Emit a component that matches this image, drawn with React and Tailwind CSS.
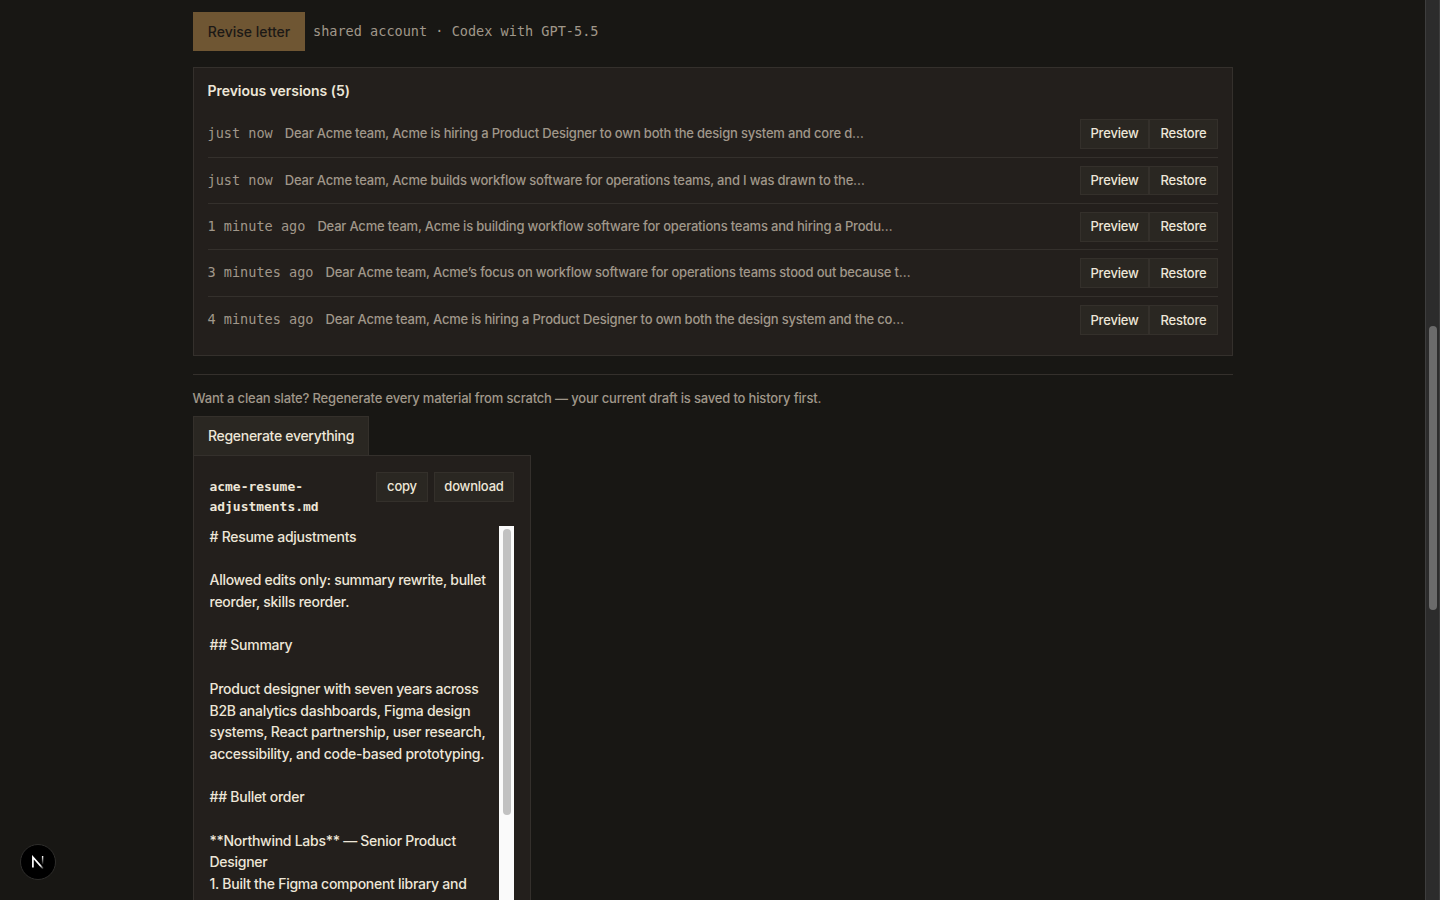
import React from "react";

const versions = [
  {
    when: "just now",
    text: "Dear Acme team, Acme is hiring a Product Designer to own both the design system and core d…",
  },
  {
    when: "just now",
    text: "Dear Acme team, Acme builds workflow software for operations teams, and I was drawn to the…",
  },
  {
    when: "1 minute ago",
    text: "Dear Acme team, Acme is building workflow software for operations teams and hiring a Produ…",
  },
  {
    when: "3 minutes ago",
    text: "Dear Acme team, Acme’s focus on workflow software for operations teams stood out because t…",
  },
  {
    when: "4 minutes ago",
    text: "Dear Acme team, Acme is hiring a Product Designer to own both the design system and the co…",
  },
];

const resume = `# Resume adjustments

Allowed edits only: summary rewrite, bullet
reorder, skills reorder.

## Summary

Product designer with seven years across
B2B analytics dashboards, Figma design
systems, React partnership, user research,
accessibility, and code-based prototyping.

## Bullet order

**Northwind Labs** — Senior Product
Designer
1. Built the Figma component library and`;

const SmallButton = ({ children, className = "" }) => (
  <button
    className={`h-[29.5px] shrink-0 border border-[#34302b] bg-[#2a2722] pb-px text-[13px] font-medium leading-[20px] tracking-[-0.2px] text-[#ede6d8] ${className}`}
  >
    {children}
  </button>
);

const App = () => {
  return (
    <div className="flex h-[900px] w-[1440px] overflow-hidden bg-[#181714] font-['Inter',sans-serif] text-[14px] leading-[21.7px] text-[#ede6d8]">
      <main className="flex h-full min-w-0 flex-1 flex-col items-start pl-[193px] pr-[192px] pt-3">
        <div className="flex items-center gap-2">
          <button className="h-[39px] w-[112px] bg-[#6f5633] pt-px font-medium text-[#1c1916]">
            Revise letter
          </button>
          <span className="font-['DejaVu_Sans_Mono',monospace] text-[13.56px] text-[#a0978a]">
            shared account · Codex with GPT-5.5
          </span>
        </div>

        <section className="mt-4 h-[289px] w-full shrink-0 border border-[#34302c] bg-[#231f1c] px-[14px] pt-3">
          <h2 className="-ml-[0.5px] font-semibold tracking-[-0.04px]">
            Previous versions (5)
          </h2>
          <ul className="mt-[9.6px]">
            {versions.map((version, index) => (
              <li
                key={index}
                className="flex h-[46.4px] items-center border-b border-[#34302c] last:border-b-0"
              >
                <span className="-ml-[0.5px] mr-3 shrink-0 font-['DejaVu_Sans_Mono',monospace] text-[13.56px] text-[#a0978a]">
                  {version.when}
                </span>
                <span className="flex-1 whitespace-nowrap text-[13px] font-[450] tracking-[-0.195px] text-[#a0978a]">
                  {version.text}
                </span>
                <SmallButton className="w-[69px]">Preview</SmallButton>
                <SmallButton className="w-[69px]">Restore</SmallButton>
              </li>
            ))}
          </ul>
        </section>

        <div className="mt-[18px] w-full border-t border-[#34302c] pt-[13px]">
          <p className="-ml-[0.5px] text-[13px] font-[450] leading-[20px] tracking-[-0.17px] text-[#a0978a]">
            Want a clean slate? Regenerate every material from scratch — your
            current draft is saved to history first.
          </p>
        </div>
        <button className="mt-2 h-[39.5px] w-[176px] shrink-0 border border-[#34302b] bg-[#2a2722] font-medium tracking-[-0.29px]">
          Regenerate everything
        </button>

        <article className="-mt-[0.5px] flex h-[500px] w-[338px] shrink-0 flex-col border border-[#34302c] bg-[#231f1c] px-4 pt-4">
          <header className="flex h-[54px] shrink-0 items-start">
            <h3 className="-ml-[0.5px] flex-1 pt-[5px] font-['DejaVu_Sans_Mono',monospace] text-[12.95px] font-bold leading-[20px]">
              acme-resume-
              <br />
              adjustments.md
            </h3>
            <SmallButton className="mr-1.5 w-[52px]">copy</SmallButton>
            <SmallButton className="w-[80px]">download</SmallButton>
          </header>
          <div className="flex min-h-0 flex-1">
            <pre className="-ml-[0.5px] min-w-0 flex-1 font-['Inter',sans-serif] font-[450] leading-[21.68px] tracking-[-0.27px]">
              {resume}
            </pre>
            <div className="w-[15px] shrink-0 bg-[#fafafa] px-1 pt-[3px]">
              <div className="h-[286px] w-2 rounded-full bg-[#c1c1c1]" />
            </div>
          </div>
        </article>
      </main>

      <div className="w-[15px] shrink-0 border-x border-[#3e3e3e] bg-[#2c2c2c] pl-[3px] pt-[326px]">
        <div className="h-[284px] w-2 rounded-full bg-[#6b6b6b]" />
      </div>

      <div className="fixed bottom-5 left-5 flex size-9 items-center justify-center rounded-full border border-[#2f2e2c] bg-black">
        <svg width="14" height="14" viewBox="0 0 14 14" fill="none">
          <defs>
            <linearGradient id="diagonal" x1="7" y1="7" x2="12" y2="13" gradientUnits="userSpaceOnUse">
              <stop offset="0.5" stopColor="white" />
              <stop offset="1" stopColor="white" stopOpacity="0.25" />
            </linearGradient>
            <linearGradient id="stem" x1="12" y1="1" x2="12" y2="10" gradientUnits="userSpaceOnUse">
              <stop stopColor="white" />
              <stop offset="1" stopColor="white" stopOpacity="0" />
            </linearGradient>
          </defs>
          <path d="M1.9 12.5V2.2L12 13.6" stroke="url(#diagonal)" strokeWidth="1.7" />
          <path d="M11.6 1V9.5" stroke="url(#stem)" strokeWidth="1.4" />
        </svg>
      </div>
    </div>
  );
};

export default App;
